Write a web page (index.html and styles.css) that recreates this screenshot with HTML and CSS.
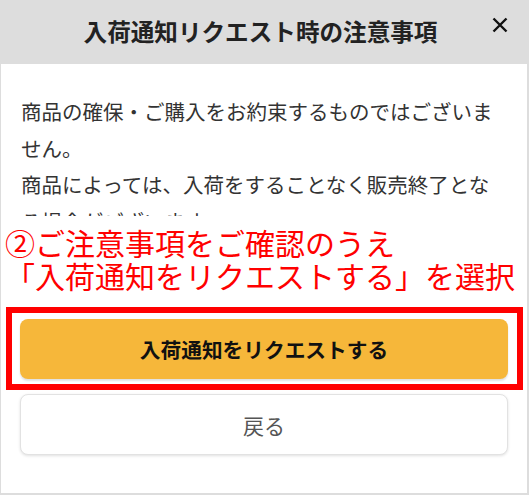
FILE: index.html
```html
<!DOCTYPE html>
<html lang="ja">
<head>
  <meta charset="UTF-8">
  <meta name="viewport" content="width=device-width, initial-scale=1.0">
  <title>入荷通知リクエスト時の注意事項</title>
  <link rel="stylesheet" href="styles.css">
</head>
<body>
  <div class="modal">
    <div class="modal-header">
      <h1 class="modal-title">入荷通知リクエスト時の注意事項</h1>
      <button class="close" aria-label="閉じる">
        <svg width="16" height="16" viewBox="0 0 16 16">
          <path d="M1.5 1.5 L14.5 14.5 M14.5 1.5 L1.5 14.5" stroke="#111" stroke-width="2.4" fill="none"/>
        </svg>
      </button>
    </div>

    <div class="modal-body">
      <div class="notice">
        商品の確保・ご購入をお約束するものではございません。<br>
        商品によっては、入荷をすることなく販売終了となる場合がございます。
      </div>

      <p class="annotation">②ご注意事項をご確認のうえ<br>「入荷通知をリクエストする」を選択</p>

      <div class="highlight">
        <button class="btn btn-primary">入荷通知をリクエストする</button>
      </div>
      <button class="btn btn-back">戻る</button>
    </div>
  </div>
</body>
</html>
```

FILE: styles.css
```css
html, body {
  margin: 0;
  padding: 0;
}
body {
  width: 529px;
  height: 495px;
  overflow: hidden;
  background-color: #dddddd;
  font-family: "Noto Sans CJK JP", "Noto Sans", sans-serif;
  color: #333;
}
.modal-header {
  position: relative;
  height: 64px;
  display: flex;
  align-items: center;
  justify-content: center;
  padding-right: 8px;
}
.modal-title {
  margin: 0;
  font-size: 23.6px;
  font-weight: bold;
  color: #222;
  line-height: 1;
}
.close {
  position: absolute;
  left: 492px;
  top: 17px;
  width: 16px;
  height: 16px;
  padding: 0;
  border: none;
  background: none;
  cursor: pointer;
}
.close svg {
  display: block;
}
.modal-body {
  height: 429px;
  margin: 0 2px 0 1px;
  background: white;
  overflow: hidden;
}
.notice {
  height: 123px;
  padding: 29px 20px 0 20px;
  overflow: hidden;
  font-size: 20.5px;
  line-height: 36.5px;
  color: #333;
}
.annotation {
  margin: 10px 0 0 4px;
  font-size: 30px;
  line-height: 33px;
  color: #ff0000;
  white-space: nowrap;
}
.highlight {
  margin: 15px 4px 0 5px;
  padding: 6px 9px 5px 8px;
  border: 6px solid #ff0000;
}
.btn {
  display: flex;
  align-items: center;
  justify-content: center;
  width: 100%;
  border-radius: 8px;
  font-family: inherit;
  cursor: pointer;
}
.btn-primary {
  height: 60px;
  border: none;
  background-color: #f6b73a;
  color: #111;
  font-size: 20.7px;
  font-weight: bold;
  box-shadow: 0 2px 2px rgba(0, 0, 0, 0.12);
}
.btn-back {
  width: auto;
  height: 61px;
  margin: 4px 19px 0 19px;
  width: calc(100% - 38px);
  border: 1px solid #e2e2e2;
  background-color: white;
  color: #555;
  font-size: 21px;
  box-shadow: 0 1px 3px rgba(0, 0, 0, 0.12);
}
```
